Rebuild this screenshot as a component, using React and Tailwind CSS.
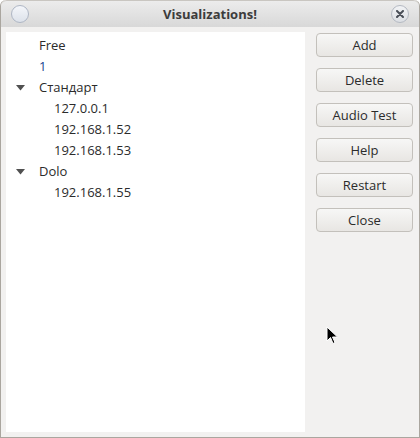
import React from 'react';

const rows = [
  { label: 'Free', level: 0 },
  { label: '1', level: 0, blue: true },
  { label: 'Стандарт', level: 0, open: true },
  { label: '127.0.0.1', level: 1 },
  { label: '192.168.1.52', level: 1 },
  { label: '192.168.1.53', level: 1 },
  { label: 'Dolo', level: 0, open: true },
  { label: '192.168.1.55', level: 1 },
];

const buttons = ['Add', 'Delete', 'Audio Test', 'Help', 'Restart', 'Close'];

function App() {
  return (
    <div
      className="relative w-[420px] h-[438px] bg-[#f2f1f0] border border-t-0 border-[#aaa69f] rounded-t-[6px] overflow-hidden text-[13px] text-[#333333]"
      style={{ fontFamily: '"Open Sans", "Noto Sans", sans-serif' }}
    >
      {/* Title bar */}
      <div className="relative h-[27px] flex items-center justify-center bg-gradient-to-b from-[#ececec] to-[#d8d8d8] border-t border-[#c9c6c1] rounded-t-[6px]">
        <div className="absolute left-[10px] top-[4px] w-[18px] h-[18px] rounded-full border border-[#aeb6c4] bg-gradient-to-b from-[#f4f6fa] to-[#dde2ea]" />
        <span className="font-bold text-[#3c3c3c] text-[13px] leading-none">Visualizations!</span>
        <div className="absolute right-[10px] top-[4px] w-[18px] h-[18px] rounded-full border border-[#b4b9c2] bg-gradient-to-b from-[#f2f3f5] to-[#dcdfe4] flex items-center justify-center">
          <svg width="8" height="8" viewBox="0 0 8 8">
            <path d="M1 1 L7 7 M7 1 L1 7" stroke="#4a4f58" strokeWidth="2" strokeLinecap="round" />
          </svg>
        </div>
      </div>

      {/* Body */}
      <div className="flex pl-[5px] pt-[5px]">
        <div className="w-[299px] h-[400px] bg-white pt-[3px]">
          {rows.map(r => (
            <div key={r.label} className="h-[21px] flex items-center">
              <div className="w-[33px] flex justify-end pr-[14px]">
                {r.open && (
                  <svg width="9" height="6" viewBox="0 0 9 6">
                    <path d="M0 0 L9 0 L4.5 5.5 Z" fill="#505050" />
                  </svg>
                )}
              </div>
              <span className={`${r.level === 1 ? 'ml-[15px]' : ''} ${r.blue ? 'text-[#1a3f8f]' : 'text-[#2b2b2b]'}`}>
                {r.label}
              </span>
            </div>
          ))}
        </div>
        <div className="ml-[11px] pt-[1px] flex flex-col gap-[11px]">
          {buttons.map(b => (
            <button
              key={b}
              className="w-[97px] h-[24px] rounded-[4px] border border-[#c3c0bb] bg-gradient-to-b from-[#f7f7f6] to-[#e8e6e3] text-[#2b2b2b] text-[13px] leading-none"
            >
              {b}
            </button>
          ))}
        </div>
      </div>

      {/* Mouse pointer */}
      <svg className="absolute left-[325px] top-[326px]" width="14" height="20" viewBox="0 0 14 20">
        <path d="M1 1 L1 15 L4.5 11.5 L7 17.5 L9 16.5 L6.5 11 L11.5 11 Z" fill="#000" stroke="#fff" strokeWidth="1" />
      </svg>
    </div>
  );
}

export default App;
